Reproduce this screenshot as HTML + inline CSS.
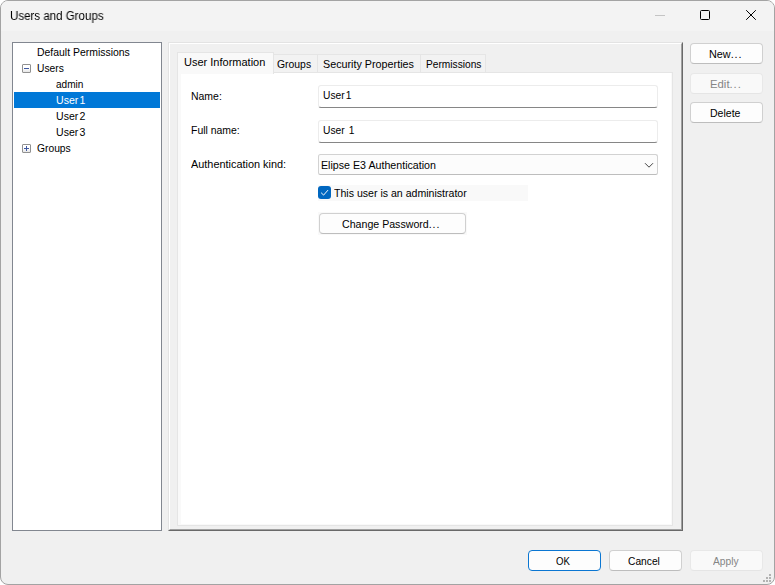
<!DOCTYPE html>
<html lang="en">
<head>
<meta charset="utf-8">
<title>Users and Groups</title>
<style>
*{box-sizing:border-box;margin:0;padding:0}
html,body{width:775px;height:585px;overflow:hidden;background:#fff}
body{font-family:"Liberation Sans",sans-serif;font-size:11px;color:#000;position:relative;-webkit-font-smoothing:antialiased}
.abs{position:absolute}
.t{position:absolute;white-space:pre;line-height:14px;height:14px}
#win{position:absolute;left:0;top:0;width:775px;height:585px;background:#f0f0f0;border:1px solid #a3a3a3;border-radius:8px;overflow:hidden}
#titlebar{position:absolute;left:0;top:0;width:773px;height:30px;background:#f3f3f3}
#title{font-size:12px;left:10px;top:8px;line-height:16px;height:16px;letter-spacing:0}
/* tree */
#tree{position:absolute;left:12px;top:42px;width:150px;height:489px;background:#fff;border:1px solid #828790}
.row{position:absolute;left:1px;width:146px;height:16px}
.sel{background:#0078d7}
.box{position:absolute;width:9px;height:9px;border:1px solid #919191;border-radius:1px;background:linear-gradient(#fff 0%,#fff 45%,#e6e6e6 100%)}
.box i{position:absolute;background:#4059a2;display:block}
/* raised panel */
#panel{position:absolute;left:168px;top:42px;width:515px;height:489px;background:#f0f0f0;
 border-left:1px solid #e3e3e3;border-top:1px solid #e3e3e3;border-right:1px solid #696969;border-bottom:1px solid #696969}
#panel:before{content:"";position:absolute;left:0;top:0;right:0;bottom:0;
 border-left:1px solid #fff;border-top:1px solid #fff;border-right:1px solid #a0a0a0;border-bottom:1px solid #a0a0a0}
/* tabs */
.tab{position:absolute;top:54px;height:18px;background:#f2f2f2;border:1px solid #e5e5e5;border-bottom:none}
#tabsel{top:52px;height:22px;background:#f9f9f9;border:1px solid #e5e5e5;border-bottom:none;z-index:2}
#pane{position:absolute;left:177px;top:72px;width:496px;height:454px;background:#f9f9f9;border:1px solid #e5e5e5}
#page{position:absolute;left:181px;top:73px;width:490px;height:451px;background:#fff}
/* fields */
.edit{position:absolute;left:318px;width:340px;height:23px;background:#fff;border:1px solid #ececec;border-bottom:1px solid #868686;border-radius:3px}
#combo{position:absolute;left:318px;top:154px;width:340px;height:21px;background:#fcfcfc;border:1px solid #d2d2d2;border-bottom-color:#bdbdbd;border-radius:2.5px}
.btn{position:absolute;height:21px;background:#fdfdfd;border:1px solid #d0d0d0;border-bottom-color:#bdbdbd;border-radius:4px}
.btn.dis{background:#f9f9f9;border-color:#e8e8e8;border-bottom-color:#e5e5e5}
.btn.def{border:1px solid #0a76d2;border-bottom-color:#0a76d2}
.gray{color:#858585}
.dots{letter-spacing:.9px}
.dg{margin-left:1.2px}
#chkband{position:absolute;left:318px;top:185px;width:210px;height:16px;background:#f9f9f9}
#chk{position:absolute;left:318px;top:186px;width:13px;height:13px;background:#0067c0;border-radius:3px}

.t{transform-origin:0 0}
#title{transform:scaleX(.961);will-change:transform}
#tr0{transform:scaleX(.949)}
#tr1{transform:scaleX(.935)}
#tr2{transform:scaleX(.915)}
#tr6{transform:scaleX(.935)}
#tb1{transform:scaleX(.945)}
#tb2{transform:scaleX(.978)}
#tb3{transform:scaleX(.925)}
#lb0{transform:scaleX(.95)}
#lb1{transform:scaleX(.949)}
#lb2{transform:scaleX(.99)}
#ed0{transform:scaleX(.93)}
#tr3,#tr4,#tr5{transform:scaleX(.96)}
#ed1{transform:scaleX(.935);word-spacing:1.2px}
#cb0{transform:scaleX(.969)}
#ck0{transform:scaleX(.961)}
#bt0{transform:scaleX(.965)}
#bt1{transform:scaleX(.985)}
#bt2{transform:scaleX(1.03)}
#bt3{transform:scaleX(.956)}
#bt4{transform:scaleX(.875)}
#bt5{transform:scaleX(.93)}
#bt6{transform:scaleX(.93)}
</style>
</head>
<body>
<div id="win">
 <div id="titlebar"></div>
</div>

<div class="t" id="title">Users and Groups</div>

<!-- caption buttons -->
<svg class="abs" style="left:650px;top:5px" width="120" height="20" viewBox="0 0 120 20">
 <line x1="5" y1="10.5" x2="15" y2="10.5" stroke="#c4c4c4" stroke-width="1"/>
 <rect x="50.5" y="5.5" width="9" height="9" rx="1" ry="1" fill="none" stroke="#000" stroke-width="1"/>
 <path d="M96.2 5.2 L105.8 14.8 M105.8 5.2 L96.2 14.8" stroke="#000" stroke-width="1" fill="none"/>
</svg>

<!-- tree -->
<div id="tree">
 <div class="row sel" style="top:49px"></div>
</div>
<div class="box" style="left:22px;top:64px"><i style="left:1px;top:3px;width:5px;height:1px"></i></div>
<div class="box" style="left:22px;top:144px"><i style="left:1px;top:3px;width:5px;height:1px"></i><i style="left:3px;top:1px;width:1px;height:5px"></i></div>
<div class="t" id="tr0" style="left:37px;top:45px">Default Permissions</div>
<div class="t" id="tr1" style="left:37px;top:61px">Users</div>
<div class="t" id="tr2" style="left:56px;top:77px">admin</div>
<div class="t" id="tr3" style="left:56px;top:93px;color:#fff">User<span class="dg">1</span></div>
<div class="t" id="tr4" style="left:56px;top:109px">User<span class="dg">2</span></div>
<div class="t" id="tr5" style="left:56px;top:125px">User<span class="dg">3</span></div>
<div class="t" id="tr6" style="left:37px;top:141px">Groups</div>

<!-- raised panel -->
<div id="panel"></div>
<div id="pane"></div>
<div id="page"></div>
<div class="tab" id="tabsel" style="left:177px;width:97px"></div>
<div class="tab" style="left:273px;width:45px"></div>
<div class="tab" style="left:317px;width:104px"></div>
<div class="tab" style="left:420px;width:66px"></div>
<div class="t" id="tb0" style="left:184px;top:55px;z-index:3">User Information</div>
<div class="t" id="tb1" style="left:277px;top:57px">Groups</div>
<div class="t" id="tb2" style="left:323px;top:57px">Security Properties</div>
<div class="t" id="tb3" style="left:426px;top:57px">Permissions</div>

<!-- form -->
<div class="t" id="lb0" style="left:191px;top:89px">Name:</div>
<div class="t" id="lb1" style="left:191px;top:123px">Full name:</div>
<div class="t" id="lb2" style="left:191px;top:157px">Authentication kind:</div>
<div class="edit" style="top:85px"></div>
<div class="edit" style="top:120px"></div>
<div class="t" id="ed0" style="left:323px;top:88px">User<span class="dg">1</span></div>
<div class="t" id="ed1" style="left:323px;top:123px">User 1</div>
<div id="combo"></div>
<div class="t" id="cb0" style="left:321px;top:158px">Elipse E3 Authentication</div>
<svg class="abs" style="left:643px;top:160px" width="12" height="10" viewBox="0 0 12 10"><path d="M2 3.2 L6 7.2 L10 3.2" fill="none" stroke="#444" stroke-width="1"/></svg>

<div id="chkband"></div>
<div id="chk"></div>
<svg class="abs" style="left:318px;top:186px" width="13" height="13" viewBox="0 0 13 13"><path d="M3.1 6.7 L5.6 9.1 L10 4.1" fill="none" stroke="#fff" stroke-opacity=".95" stroke-width="1"/></svg>
<div class="t" id="ck0" style="left:334px;top:186px">This user is an administrator</div>

<div class="abs" style="left:318px;top:212px;width:149px;height:23px;background:#f9f9f9"></div>
<div class="btn" style="left:319px;top:213px;width:147px"></div>
<div class="t" id="bt0" style="left:342px;top:217px">Change Password<span class="dots">...</span></div>

<!-- right buttons -->
<div class="btn" style="left:690px;top:43px;width:73px"></div>
<div class="btn dis" style="left:690px;top:73px;width:73px"></div>
<div class="btn" style="left:690px;top:102px;width:73px"></div>
<div class="t" id="bt1" style="left:709px;top:47px">New<span class="dots">...</span></div>
<div class="t gray" id="bt2" style="left:709.6px;top:77px">Edit<span class="dots">...</span></div>
<div class="t" id="bt3" style="left:710px;top:106px">Delete</div>

<!-- bottom buttons -->
<div class="btn def" style="left:528px;top:550px;width:73px"></div>
<div class="btn" style="left:609px;top:550px;width:73px"></div>
<div class="btn dis" style="left:690px;top:550px;width:73px"></div>
<div class="t" id="bt4" style="left:556px;top:554px">OK</div>
<div class="t" id="bt5" style="left:628px;top:554px">Cancel</div>
<div class="t gray" id="bt6" style="left:713px;top:554px">Apply</div>

<!-- size grip -->
<svg class="abs" style="left:761px;top:572px" width="12" height="12" viewBox="0 0 12 12" fill="#b2b2b2">
 <rect x="8" y="2" width="2" height="2"/><rect x="5" y="5" width="2" height="2"/><rect x="8" y="5" width="2" height="2"/>
 <rect x="2" y="8" width="2" height="2"/><rect x="5" y="8" width="2" height="2"/><rect x="8" y="8" width="2" height="2"/>
</svg>
</body>
</html>
